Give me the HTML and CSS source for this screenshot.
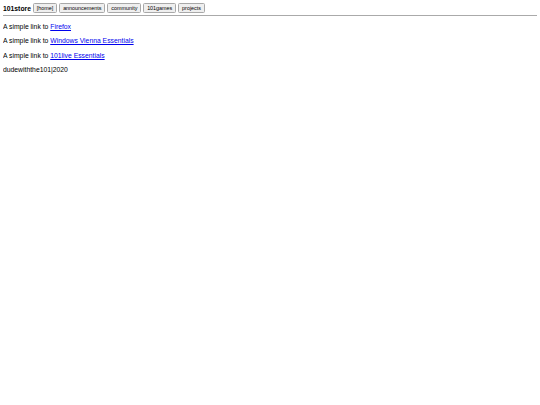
FILE: index.html
```html
<!DOCTYPE html>
<html>
<head>
<meta charset="utf-8">
<title>101store</title>
<link rel="stylesheet" href="styles.css">
</head>
<body>
<div class="topbar">
  <span class="brand">101store</span>
  <nav class="nav">
    <button class="navbtn">[home]</button>
    <button class="navbtn">announcements</button>
    <button class="navbtn">community</button>
    <button class="navbtn">101games</button>
    <button class="navbtn">projects</button>
  </nav>
</div>
<hr class="rule">
<main class="content">
  <p class="line">A simple link to <a href="#">Firefox</a></p>
  <p class="line">A simple link to <a href="#">Windows Vienna Essentials</a></p>
  <p class="line">A simple link to <a href="#">101live Essentials</a></p>
  <p class="line">dudewiththe101|2020</p>
</main>
</body>
</html>
```
FILE: styles.css
```css
html, body {
  background: #ffffff;
}
body {
  margin: 3px 3px;
  font-family: "Liberation Sans", Arial, sans-serif;
  font-size: 6.8px;
  color: #000000;
}
.topbar {
  display: flex;
  align-items: center;
  gap: 2px;
  height: 10px;
}
.brand {
  font-weight: bold;
  font-size: 6.8px;
}
.nav {
  display: flex;
  gap: 2px;
}
.navbtn {
  font-family: "Liberation Sans", Arial, sans-serif;
  font-size: 5.4px;
  padding: 1px 2.9px;
  margin: 0;
  border: 1px solid #a8a8a8;
  border-radius: 1.5px;
  background: #efefef;
  color: #000;
  line-height: 6px;
}
.rule {
  margin: 2px 0 0 0;
  border: 0;
  border-top: 1px solid #aaaaaa;
  height: 0;
}
.content {
  padding-top: 0;
}
.line {
  margin: 6.5px 0;
  line-height: 8px;
}
.line a {
  color: #0000ee;
}
```
